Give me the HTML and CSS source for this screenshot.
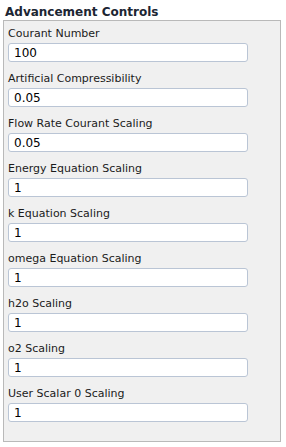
FILE: index.html
```html
<!DOCTYPE html>
<html lang="en">
<head>
    <meta charset="UTF-8">
    <title>Advancement Controls</title>
    <link rel="stylesheet" href="styles.css">
</head>
<body>
    <div class="panel">
        <div class="title">Advancement Controls</div>
        <div class="group">
            <label>Courant Number</label>
            <input type="text" value="100">
            <label>Artificial Compressibility</label>
            <input type="text" value="0.05">
            <label>Flow Rate Courant Scaling</label>
            <input type="text" value="0.05">
            <label>Energy Equation Scaling</label>
            <input type="text" value="1">
            <label>k Equation Scaling</label>
            <input type="text" value="1">
            <label>omega Equation Scaling</label>
            <input type="text" value="1">
            <label>h2o Scaling</label>
            <input type="text" value="1">
            <label>o2 Scaling</label>
            <input type="text" value="1">
            <label>User Scalar 0 Scaling</label>
            <input type="text" value="1">
        </div>
    </div>
</body>
</html>
```

FILE: styles.css
```css
body { margin: 0; background: #fff; font-family: "DejaVu Sans", Verdana, sans-serif; font-size: 11px; color: #1b1b1b; }
.panel { padding: 4px 5px 0 3px; }
.title { font-weight: bold; font-size: 12px; color: #1c2633; padding-left: 2px; height: 16px; line-height: 16px; }
.group { background: #f0f0f0; border: 1px solid #b9b9b9; padding: 1px 32px 14px 4px; display: flex; flex-direction: column; }
label { display: block; height: 18px; line-height: 18px; margin-top: 3px; }
input { box-sizing: border-box; height: 19px; margin: 0 0 5px 0; padding: 0 0 0 5px; border: 1px solid #bac5d5; border-radius: 3px; background: #fff; font: inherit; font-size: 12px; color: #000; outline: none; }
```
